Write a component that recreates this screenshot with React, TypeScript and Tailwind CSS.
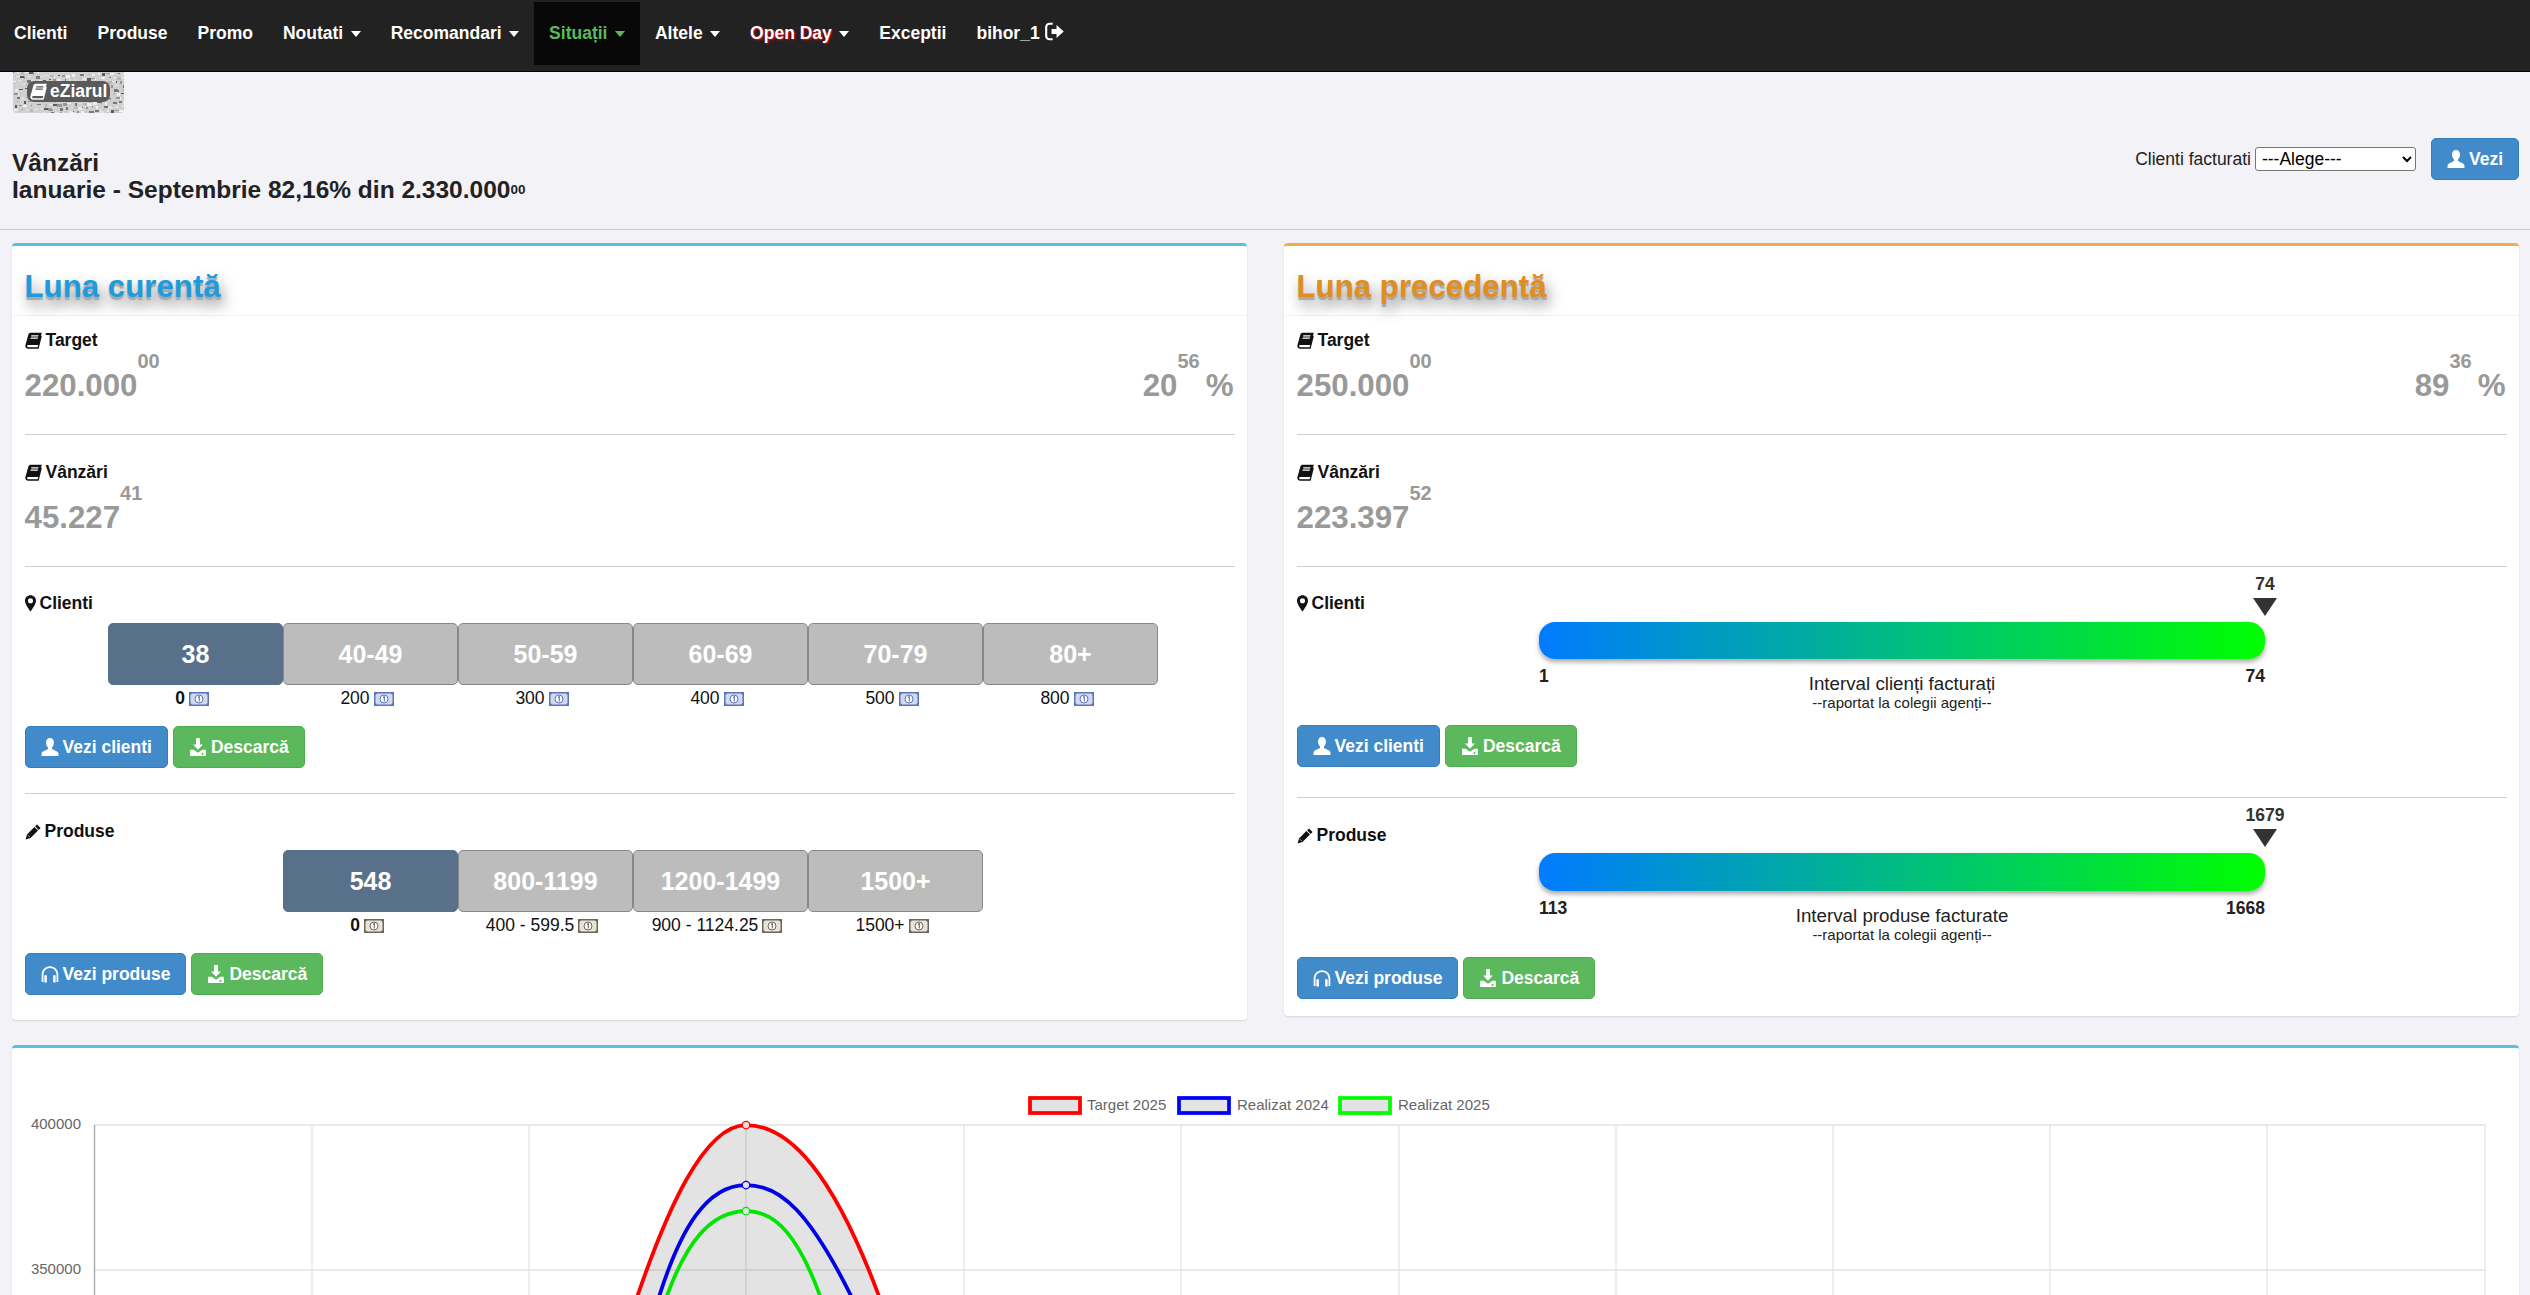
import React from "react";

const Book = ({ className = "", white = false }: { className?: string; white?: boolean }) => (
  <svg viewBox="0 0 16 16" className={className} fill="currentColor">
    <path d="M5.200.6H15.800L12.700 12.200H3.400C2.500 12.200 2 12.700 2 13.300S2.500 14.400 3.300 14.400H11.900L14.900 3.400 15.800 4 12.800 15.800H3C1.500 15.800.3 14.600.3 13.200c0-.4.1-.8.2-1.200L3.200 2.400C3.500 1.300 4.200.6 5.200.6z" />
    <path d="M6 3h6.800l-.3 1.200H5.700zM5.400 5.200h6.800l-.3 1.100H5.100z" fill={white ? "#555" : "#fff"} />
  </svg>
);
const Marker = ({ className = "" }: { className?: string }) => (
  <svg viewBox="0 0 12 18" className={className} fill="currentColor">
    <path fillRule="evenodd" d="M6 0C2.600 0 0 2.600 0 5.900 0 9.600 4 14.600 6 18c2-3.400 6-8.400 6-12.100C12 2.600 9.400 0 6 0zm0 3.200a2.800 2.800 0 1 1 0 5.600 2.800 2.800 0 0 1 0-5.600z" />
  </svg>
);
const Pencil = ({ className = "" }: { className?: string }) => (
  <svg viewBox="0 0 16 16" className={className} fill="currentColor">
    <path d="M12 .4l3.600 3.600-1.900 1.900-3.600-3.600zM9.400 3l3.600 3.600-7.500 7.500-4.900 1.500 1.400-5z" />
    <path d="M2.900 11.200l1.900 1.900" stroke="#fff" strokeWidth="0.700" fill="none" />
  </svg>
);
const User = ({ className = "" }: { className?: string }) => (
  <svg viewBox="0 0 16 16" className={className} fill="currentColor">
    <path d="M8 0C5.800 0 4.500 1.700 4.500 3.900c0 1.800.7 3.300 1.600 4.400.3.400.3 1 0 1.400C5 10.800 1 11.300.5 13.500V16h15v-2.500c-.5-2.200-4.500-2.700-5.600-3.800-.3-.4-.3-1 0-1.400.9-1.100 1.600-2.600 1.600-4.400C11.500 1.700 10.200 0 8 0z" />
  </svg>
);
const Download = ({ className = "" }: { className?: string }) => (
  <svg viewBox="0 0 16 16" className={className} fill="currentColor">
    <path d="M6.300 0h3.400v5.800h2.700L8 10.500 3.600 5.800h2.700z" />
    <path fillRule="evenodd" d="M1 10.500h3.200L8 13l3.800-2.500H15V16H1zm11 2.800a.9.9 0 1 0 0 1.800.9.9 0 0 0 0-1.800z" />
  </svg>
);
const Headphones = ({ className = "" }: { className?: string }) => (
  <svg viewBox="0 0 16 16" className={className} fill="currentColor">
    <path d="M8 1C3.500 1 .6 4.300.6 8.800V15h1.600V8.800C2.200 5.200 4.500 2.600 8 2.600s5.800 2.600 5.800 6.200V15h1.600V8.800C15.400 4.300 12.500 1 8 1z" />
    <path d="M3 9h2.200v6.500H3zM10.800 9H13v6.500h-2.200z" />
  </svg>
);
const LogOut = ({ className = "" }: { className?: string }) => (
  <svg viewBox="0 0 16 16" className={className} fill="currentColor">
    <path d="M6.500 1.500H3.800A2.800 2.800 0 0 0 1 4.300v7.400a2.800 2.800 0 0 0 2.800 2.800h2.700" fill="none" stroke="currentColor" strokeWidth="1.800" />
    <path d="M5.500 5.800h4.200V2.600L15.800 8l-6.100 5.400v-3.200H5.500z" />
  </svg>
);
const Money = ({ brown = false }: { brown?: boolean }) => {
  const c = brown ? "#6f6658" : "#5f74b8";
  const l = brown ? "#e8e4dc" : "#cfd9f0";
  return (
    <svg viewBox="0 0 20 14" className="inline-block w-[20px] h-[14px] shrink-0">
      <path d="M0 0h20v14H0z" fill={c} />
      <path d="M3 1.500h14l1.500 1.500v8l-1.500 1.500H3L1.500 11V3z" fill={l} />
      <circle cx="10" cy="7" r="4" fill="#fff" stroke={c} strokeWidth="1" />
      <path d="M9 5.500l1.300-1V9.500" fill="none" stroke={c} strokeWidth="1.100" />
    </svg>
  );
};

const Caret = ({ green = false }: { green?: boolean }) => (
  <span className={`inline-block ml-[7.500px] w-0 h-0 border-t-[6px] border-x-[5px] border-x-transparent align-middle ${green ? "border-t-[#5cb85c]" : "border-t-white"}`} />
);

const NavItem = ({ label, caret, first }: { label: string; caret?: boolean; first?: boolean }) => (
  <a className={`h-[63px] mt-[2px] flex items-center pr-[15px] text-white font-bold ${first ? "pl-[14px]" : "pl-[15px]"}`}>
    <span>{label}</span>
    {caret && <Caret />}
  </a>
);

const Navbar = () => (
  <nav className="h-[72px] bg-[#222222] border-b border-black flex items-start shrink-0">
    <NavItem first label="Clienti" />
    <NavItem label="Produse" />
    <NavItem label="Promo" />
    <NavItem label="Noutati" caret />
    <NavItem label="Recomandari" caret />
    <a className="h-[63px] mt-[2px] flex items-center px-[15px] bg-[#080808] text-[#5cb85c] font-bold">
      <span>Situații</span>
      <Caret green />
    </a>
    <NavItem label="Altele" caret />
    <a className="h-[63px] mt-[2px] flex items-center px-[15px] text-white font-bold">
      <span className="[text-shadow:1px_1px_2px_#ff0000]">Open Day</span>
      <Caret />
    </a>
    <NavItem label="Exceptii" />
    <a className="h-[63px] mt-[2px] flex items-center pl-[15px] text-white font-bold">
      <span>bihor_1</span>
      <LogOut className="w-[19px] h-[19px] ml-[5px] -mt-[5px]" />
    </a>
  </nav>
);

const speck = Array.from({ length: 260 }, (_, i) => {
  const a = (i * 7919) % 111;
  const b = (i * 104729) % 41;
  const w = 1 + ((i * 31) % 5);
  const h = 1 + ((i * 17) % 3);
  const g = [120, 150, 185, 205, 90, 225, 240, 235][(i * 13) % 8];
  return { a, b, w, h, g };
});

const Logo = () => (
  <div className="relative ml-[13px] w-[111px] h-[41px] bg-[#d0d0d0] rounded-b-[4px] overflow-hidden shrink-0">
    <svg viewBox="0 0 111 41" className="w-full h-full">
      {speck.map((s, i) => (
        <rect key={i} x={s.a} y={s.b} width={s.w} height={s.h} fill={`rgb(${s.g},${s.g},${s.g})`} />
      ))}
    </svg>
    <div className="absolute left-[14px] top-[9px] w-[83px] h-[21px] bg-[#5a5a5a] rounded-[7px] flex items-center pl-[3px] gap-[3px] text-white font-bold text-[17.500px]">
      <Book white className="w-[17px] h-[17px] shrink-0" />
      <span className="leading-none">eZiarul</span>
    </div>
  </div>
);

const Btn = ({ color, icon, children }: { color: "blue" | "green"; icon: React.ReactNode; children: React.ReactNode }) => (
  <button
    className={`h-[42px] px-[15px] flex items-center gap-[4px] rounded-[5px] border text-white font-bold ${
      color === "blue" ? "bg-[#428bca] border-[#357ebd]" : "bg-[#5cb85c] border-[#4cae4c]"
    }`}
  >
    {icon}
    <span>{children}</span>
  </button>
);

const Label = ({ icon, children }: { icon: React.ReactNode; children: React.ReactNode }) => (
  <div className="h-[25px] flex items-center gap-[4px] font-bold text-[#111111]">
    {icon}
    <span>{children}</span>
  </div>
);

const Big = ({ main, sup }: { main: string; sup: string }) => (
  <span className="text-[31.250px] leading-[40px] font-bold text-[#999999]">
    {main}
    <sup className="text-[20px] top-[-28px]">{sup}</sup>
  </span>
);

const Metric = ({ label, main, sup, pct, pctSup, top }: { label: string; main: string; sup: string; pct?: string; pctSup?: string; top: string }) => (
  <section className={`border-b border-[#cfcfcf] pb-[28px] ${top}`}>
    <Label icon={<Book className="w-[17px] h-[17px]" />}>{label}</Label>
    <div className="mt-[13px] h-[40px] flex justify-between">
      <Big main={main} sup={sup} />
      {pct && (
        <span className="pr-[1px]">
          <Big main={pct} sup={pctSup ?? ""} />
          <span className="ml-[6px] text-[31.250px] leading-[40px] font-bold text-[#999999]">%</span>
        </span>
      )}
    </div>
  </section>
);

const Ranges = ({ items, offset, brown }: { items: { label: string; value: string; active?: boolean }[]; offset: string; brown?: boolean }) => (
  <div className={offset}>
    <div className="flex">
      {items.map((it) => (
        <div
          key={it.label}
          className={`w-[175px] h-[62px] rounded-[5px] border flex items-center justify-center text-[25px] font-bold text-white ${
            it.active ? "bg-[#587089] border-[#587089]" : "bg-[#bcbcbc] border-[#888888]"
          }`}
        >
          {it.label}
        </div>
      ))}
    </div>
    <div className="flex pt-[1px]">
      {items.map((it) => (
        <div key={it.label} className={`w-[175px] h-[25px] pr-[7px] flex items-center justify-center gap-[4px] text-[#111111] ${it.active ? "font-bold" : ""}`}>
          <span>{it.value}</span>
          <Money brown={brown} />
        </div>
      ))}
    </div>
  </div>
);

const Interval = ({ marker, from, to, title, barH }: { marker: string; from: string; to: string; title: string; barH: string }) => (
  <div className="w-[726px] pt-[7px]">
    <div className="flex justify-end">
      <div className="w-[60px] -mr-[30px] flex flex-col items-center">
        <span className="h-[20px] leading-[20px] font-bold text-[#333333]">{marker}</span>
        <span className="mt-[4px] w-0 h-0 border-t-[18px] border-x-[12px] border-x-transparent border-t-[#333333]" />
      </div>
    </div>
    <div className={`mt-[6px] ${barH} rounded-[16px] bg-[linear-gradient(to_right,#007bff,#00ff00)] shadow-[0_3px_5px_rgba(0,0,0,0.35)]`} />
    <div className="mt-[5px] grid grid-cols-[1fr_auto_1fr]">
      <span className="h-[25px] leading-[25px] font-bold text-[#222222]">{from}</span>
      <div className="pt-[10px] text-center text-[#222222]">
        <div className="leading-[20px] text-[18.750px]">{title}</div>
        <div className="leading-[18px] text-[15px]">--raportat la colegii agenți--</div>
      </div>
      <span className="h-[25px] leading-[25px] font-bold text-right text-[#222222]">{to}</span>
    </div>
  </div>
);

const CardHeader = ({ title, color }: { title: string; color: string }) => (
  <header className="h-[70px] border-b border-[#f4f4f4] pl-[12.500px] pt-[22px]">
    <h2 className={`text-[31.250px] leading-[38px] font-bold ${color} [text-shadow:0_3px_1px_#a8a8a8,3px_8px_14px_rgba(0,0,0,0.5)]`}>{title}</h2>
  </header>
);

const LeftCard = () => (
  <div className="flex-1 h-[777px] bg-white border-t-[3px] border-[#5bc0de] rounded-[4px] shadow-[0_1px_2px_rgba(0,0,0,0.12)]">
    <CardHeader title="Luna curentă" color="text-[#1f9bdc]" />
    <div className="px-[12.500px]">
      <Metric top="pt-[12px]" label="Target" main="220.000" sup="00" pct="20" pctSup="56" />
      <Metric top="pt-[25px]" label="Vânzări" main="45.227" sup="41" />
      <section className="border-b border-[#cfcfcf] pt-[24px] pb-[25px]">
        <Label icon={<Marker className="w-[11px] h-[17px]" />}>Clienti</Label>
        <div className="mt-[7px]">
          <Ranges
            offset="ml-[83.500px]"
            items={[
              { label: "38", value: "0", active: true },
              { label: "40-49", value: "200" },
              { label: "50-59", value: "300" },
              { label: "60-69", value: "400" },
              { label: "70-79", value: "500" },
              { label: "80+", value: "800" },
            ]}
          />
        </div>
        <div className="mt-[15px] flex gap-[5px]">
          <Btn color="blue" icon={<User className="w-[18px] h-[18px]" />}>Vezi clienti</Btn>
          <Btn color="green" icon={<Download className="w-[18px] h-[18px]" />}>Descarcă</Btn>
        </div>
      </section>
      <section className="pt-[25px] pb-[25px]">
        <Label icon={<Pencil className="w-[16px] h-[16px]" />}>Produse</Label>
        <div className="mt-[6px]">
          <Ranges
            brown
            offset="ml-[258.500px]"
            items={[
              { label: "548", value: "0", active: true },
              { label: "800-1199", value: "400 - 599.5" },
              { label: "1200-1499", value: "900 - 1124.25" },
              { label: "1500+", value: "1500+" },
            ]}
          />
        </div>
        <div className="mt-[15px] flex gap-[5px]">
          <Btn color="blue" icon={<Headphones className="w-[18px] h-[18px]" />}>Vezi produse</Btn>
          <Btn color="green" icon={<Download className="w-[18px] h-[18px]" />}>Descarcă</Btn>
        </div>
      </section>
    </div>
  </div>
);

const RightCard = () => (
  <div className="flex-1 h-[773px] bg-white border-t-[3px] border-[#f0ad4e] rounded-[4px] shadow-[0_1px_2px_rgba(0,0,0,0.12)]">
    <CardHeader title="Luna precedentă" color="text-[#e08e1f]" />
    <div className="px-[12.500px]">
      <Metric top="pt-[12px]" label="Target" main="250.000" sup="00" pct="89" pctSup="36" />
      <Metric top="pt-[25px]" label="Vânzări" main="223.397" sup="52" />
      <section className="border-b border-[#cfcfcf] pb-[30px]">
        <div className="flex items-start">
          <div className="w-[242.500px] pt-[24px]">
            <Label icon={<Marker className="w-[11px] h-[17px]" />}>Clienti</Label>
          </div>
          <Interval marker="74" from="1" to="74" title="Interval clienți facturați" barH="h-[37px]" />
        </div>
        <div className="mt-[13px] flex gap-[5px]">
          <Btn color="blue" icon={<User className="w-[18px] h-[18px]" />}>Vezi clienti</Btn>
          <Btn color="green" icon={<Download className="w-[18px] h-[18px]" />}>Descarcă</Btn>
        </div>
      </section>
      <section className="pb-[17px]">
        <div className="flex items-start">
          <div className="w-[242.500px] pt-[25px]">
            <Label icon={<Pencil className="w-[16px] h-[16px]" />}>Produse</Label>
          </div>
          <Interval marker="1679" from="113" to="1668" title="Interval produse facturate" barH="h-[38px]" />
        </div>
        <div className="mt-[13px] flex gap-[5px]">
          <Btn color="blue" icon={<Headphones className="w-[18px] h-[18px]" />}>Vezi produse</Btn>
          <Btn color="green" icon={<Download className="w-[18px] h-[18px]" />}>Descarcă</Btn>
        </div>
      </section>
    </div>
  </div>
);

const gridX = [312, 529, 746, 964, 1181, 1399, 1616, 1833, 2050, 2267, 2485];
const curves = [
  { color: "#ff0000", cy: 1125, d: "M632 1312C666 1210 704 1125 746 1125C788 1125 834 1170 884 1310" },
  { color: "#0000e6", cy: 1185, d: "M655 1310C680 1225 708 1185 746 1185C780 1185 810 1210 858 1310" },
  { color: "#00e600", cy: 1211, d: "M662 1310C685 1240 712 1211 746 1211C775 1211 800 1235 825 1310" },
];
const legend = [
  { x: 1029, color: "#ff0000", label: "Target 2025", tx: 1087 },
  { x: 1178, color: "#0000ff", label: "Realizat 2024", tx: 1237 },
  { x: 1339, color: "#00ff00", label: "Realizat 2025", tx: 1398 },
];

const Chart = () => (
  <svg viewBox="12 1048 2507 260" className="w-[2507px] h-[260px] block">
    <g stroke="#e4e4e4" strokeWidth="1.250">
      {gridX.map((x) => (
        <line key={x} x1={x} x2={x} y1={1125} y2={1308} />
      ))}
    </g>
    <g stroke="#e2e2e2" strokeWidth="1.500">
      <line x1="94" x2="2485" y1="1125" y2="1125" />
      <line x1="94" x2="2485" y1="1270" y2="1270" />
    </g>
    <line x1="94.500" x2="94.500" y1="1125" y2="1308" stroke="#b0b0b0" strokeWidth="1.500" />
    <path d={curves[0].d + "Z"} fill="#000000" fillOpacity="0.11" />
    {curves.map((c) => (
      <g key={c.color}>
        <path d={c.d} fill="none" stroke={c.color} strokeWidth="3.750" />
        <circle cx="746" cy={c.cy} r="3.750" fill="#e3e3e3" stroke={c.color} strokeWidth="1.250" />
      </g>
    ))}
    <g fontSize="15" fill="#666666" fontFamily="'Liberation Sans', Arial, sans-serif">
      <text x="81" y="1129" textAnchor="end">400000</text>
      <text x="81" y="1274" textAnchor="end">350000</text>
      {legend.map((l) => (
        <g key={l.label}>
          <rect x={l.x + 1} y="1098" width="50" height="15" fill="#e3e3e3" stroke={l.color} strokeWidth="3.750" />
          <text x={l.tx} y="1110">{l.label}</text>
        </g>
      ))}
    </g>
  </svg>
);

export default function App() {
  return (
    <div className="w-full h-[1295px] overflow-hidden flex flex-col bg-[#f2f2f7] text-[17.500px] leading-[25px] text-[#222222] font-['Liberation_Sans',Arial,sans-serif]">
      <Navbar />
      <Logo />
      <div className="h-[117px] shrink-0 border-b border-[#cccccc] pl-[12px] pr-[11px] flex justify-between items-start">
        <h1 className="mt-[36px] font-bold text-[24.500px] leading-[27px] text-[#222222]">
          <div>Vânzări</div>
          <div>
            Ianuarie - Septembrie 82,16% din 2.330.000<sup className="text-[13.500px] top-[-4.500px]">00</sup>
          </div>
        </h1>
        <div className="mt-[25px] flex items-center">
          <span className="mr-[4px]">Clienti facturati</span>
          <select className="w-[161px] h-[24px] mt-[-1px] bg-white border border-[#767676] rounded-[3px] text-[17.500px] px-[2px] text-black">
            <option>---Alege---</option>
          </select>
          <div className="ml-[15px]">
            <Btn color="blue" icon={<User className="w-[18px] h-[18px]" />}>Vezi</Btn>
          </div>
        </div>
      </div>
      <div className="mt-[13px] pl-[12px] pr-[11px] flex items-start gap-[37px] shrink-0">
        <LeftCard />
        <RightCard />
      </div>
      <div className="mt-[25px] ml-[12px] mr-[11px] h-[400px] shrink-0 bg-white border-t-[3px] border-[#5bc0de] rounded-[4px] shadow-[0_1px_2px_rgba(0,0,0,0.12)]">
        <Chart />
      </div>
    </div>
  );
}
